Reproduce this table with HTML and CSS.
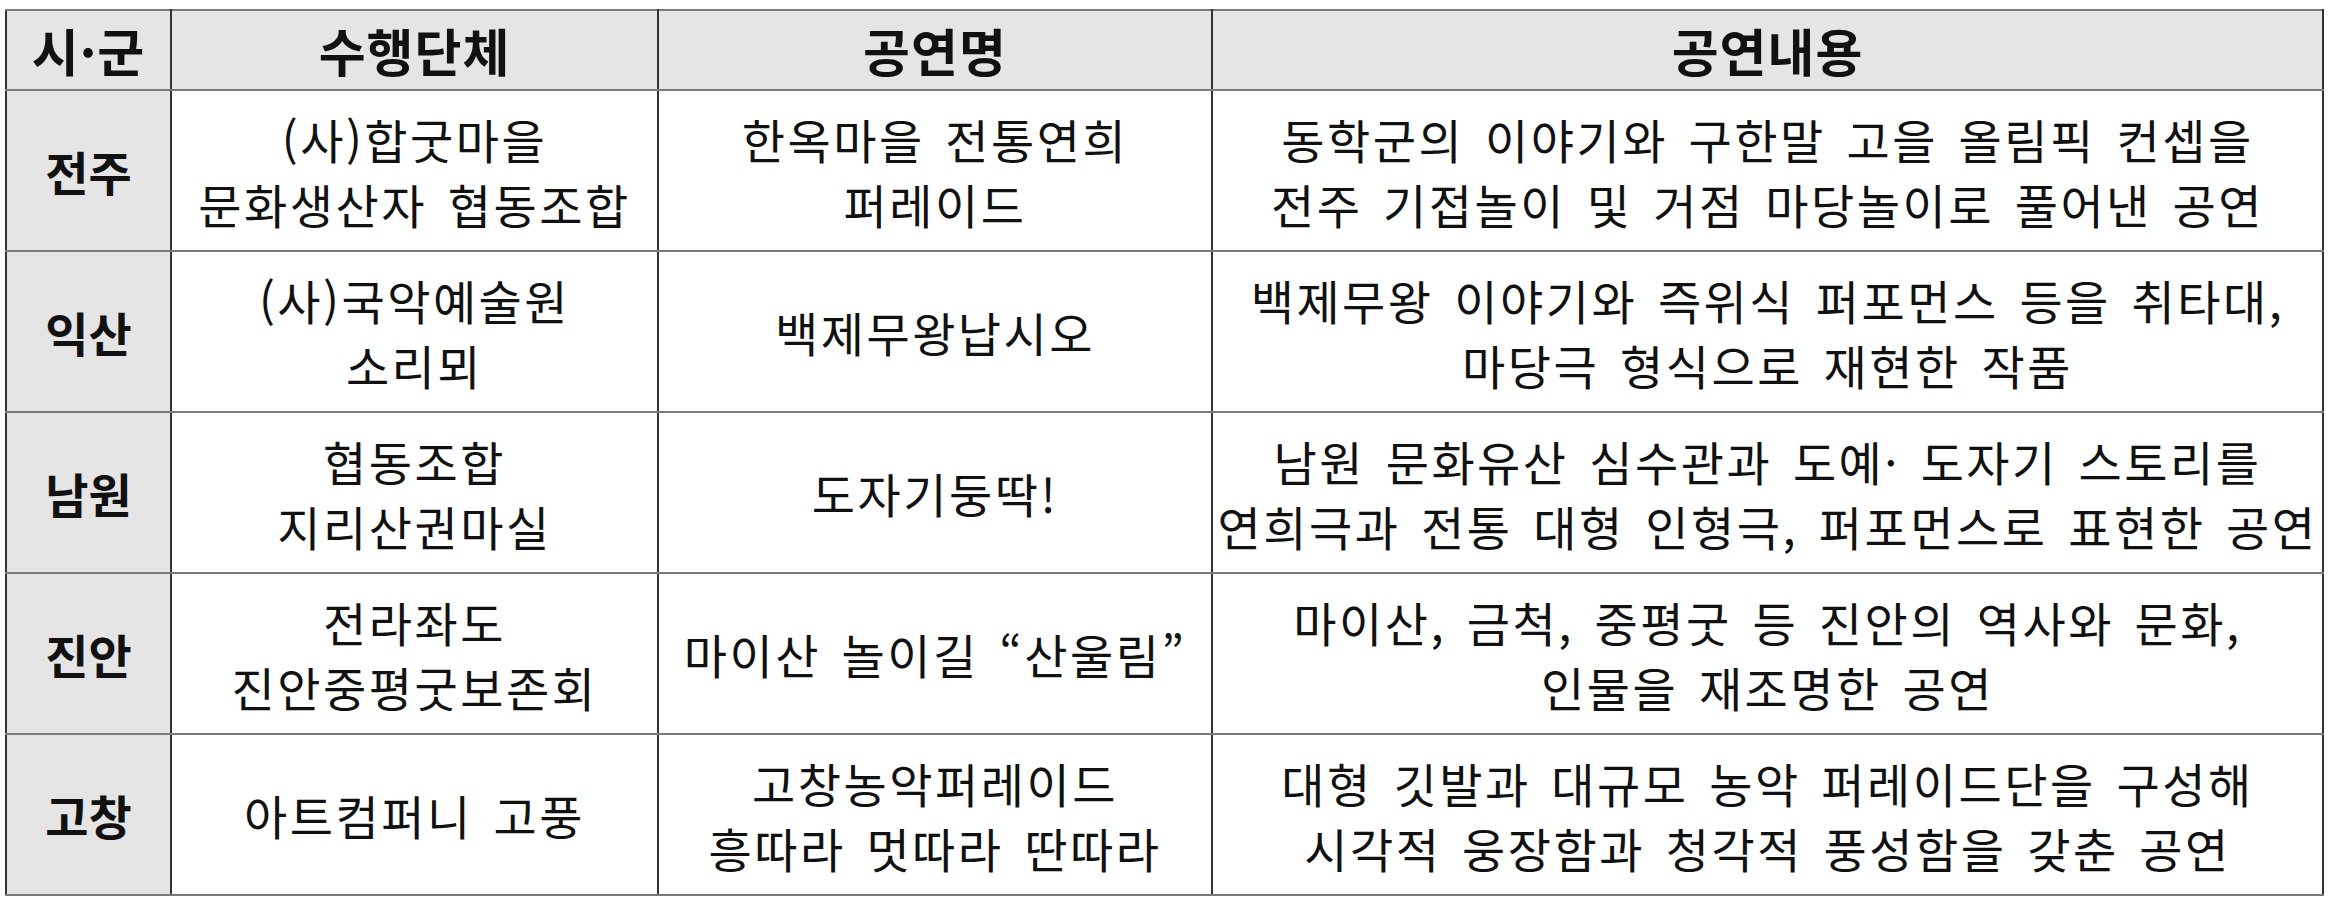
FILE: index.html
```html
<!DOCTYPE html>
<html lang="ko">
<head>
<meta charset="utf-8">
<title>공연 목록</title>
<link rel="stylesheet" href="styles.css">
</head>
<body>
<table class="grid">
  <colgroup>
    <col class="c-city">
    <col class="c-org">
    <col class="c-name">
    <col class="c-desc">
  </colgroup>
  <thead>
    <tr class="head">
      <th>시·군</th>
      <th>수행단체</th>
      <th>공연명</th>
      <th>공연내용</th>
    </tr>
  </thead>
  <tbody>
    <tr>
      <th class="city">전주</th>
      <td>(사)합굿마을<br>문화생산자 협동조합</td>
      <td>한옥마을 전통연희<br>퍼레이드</td>
      <td>동학군의 이야기와 구한말 고을 올림픽 컨셉을<br>전주 기접놀이 및 거점 마당놀이로 풀어낸 공연</td>
    </tr>
    <tr>
      <th class="city">익산</th>
      <td>(사)국악예술원<br>소리뫼</td>
      <td>백제무왕납시오</td>
      <td>백제무왕 이야기와 즉위식 퍼포먼스 등을 취타대,<br>마당극 형식으로 재현한 작품</td>
    </tr>
    <tr>
      <th class="city">남원</th>
      <td>협동조합<br>지리산권마실</td>
      <td>도자기둥딱!</td>
      <td>남원 문화유산 심수관과 도예· 도자기 스토리를<br>연희극과 전통 대형 인형극, 퍼포먼스로 표현한 공연</td>
    </tr>
    <tr>
      <th class="city">진안</th>
      <td>전라좌도<br>진안중평굿보존회</td>
      <td>마이산 놀이길 “산울림”</td>
      <td>마이산, 금척, 중평굿 등 진안의 역사와 문화,<br>인물을 재조명한 공연</td>
    </tr>
    <tr>
      <th class="city">고창</th>
      <td>아트컴퍼니 고풍</td>
      <td>고창농악퍼레이드<br>흥따라 멋따라 딴따라</td>
      <td>대형 깃발과 대규모 농악 퍼레이드단을 구성해<br>시각적 웅장함과 청각적 풍성함을 갖춘 공연</td>
    </tr>
  </tbody>
</table>
</body>
</html>
```
FILE: styles.css
```css
html, body {
  margin: 0;
  padding: 0;
  background: #ffffff;
}
body {
  padding: 9px 0 0 5px;
  font-family: "Noto Sans CJK KR", "Noto Sans", sans-serif;
  color: #111111;
}
.grid {
  border-collapse: collapse;
  table-layout: fixed;
  width: 2317px;
  border: 2px solid #7a7a7a;
}
.c-city { width: 165px; }
.c-org { width: 487px; }
.c-name { width: 554px; }
.c-desc { width: 1111px; }

.grid th,
.grid td {
  border-left: 2px solid #333333;
  border-right: 2px solid #333333;
  border-top: 2px solid #7a7a7a;
  border-bottom: 2px solid #7a7a7a;
  text-align: center;
  vertical-align: middle;
  padding: 0;
}
.head th {
  height: 78px;
  background: #e5e5e5;
  font-size: 51px;
  font-weight: 700;
  line-height: 1;
  letter-spacing: 1px;
}
.grid tbody tr {
  height: 161px;
}
.grid th.city {
  background: #e5e5e5;
  font-size: 47px;
  font-weight: 700;
}
.grid td {
  font-size: 47px;
  font-weight: 400;
  line-height: 65px;
  letter-spacing: 2.5px;
  word-spacing: 5px;
}
```
